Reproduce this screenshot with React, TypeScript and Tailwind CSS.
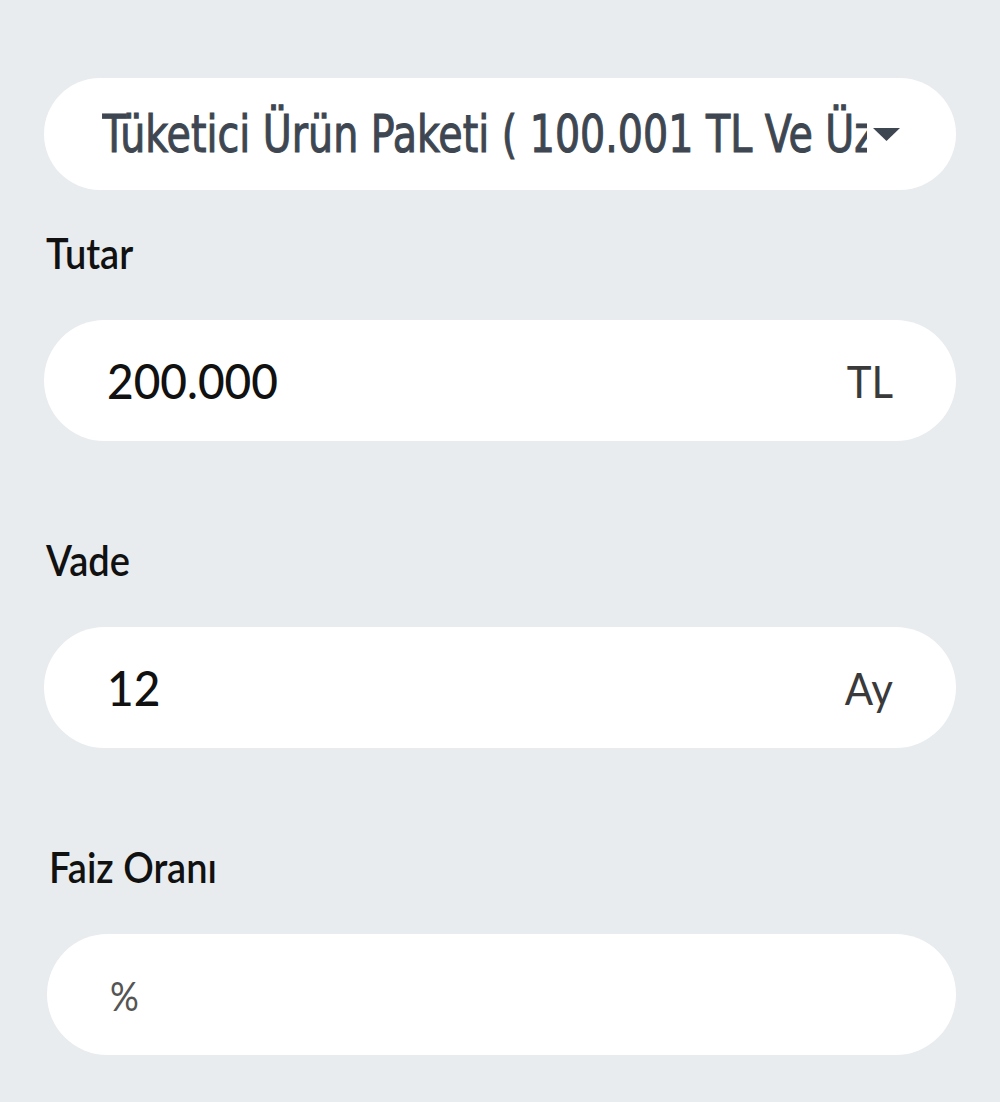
import { useState } from "react";

interface FieldProps {
  label: string;
  value: string;
  suffix?: string;
  shift?: boolean;
}

function Field({ label, value, suffix, shift }: FieldProps) {
  return (
    <div className={shift ? "flex flex-col pl-[3px]" : "flex flex-col"}>
      <div className="h-[40px] flex items-center pl-[2px] mb-[48px]">
        <span className="text-[38px] font-semibold text-[#111] leading-none origin-left scale-y-[1.12] font-['Lato',sans-serif]">
          {label}
        </span>
      </div>
      <div className="h-[121px] bg-white rounded-full flex items-center justify-between px-[63px]">
        {value === "%" ? (
          <span className="text-[36px] text-[#555] leading-none scale-y-[1.15] font-['Lato',sans-serif]">%</span>
        ) : (
          <span className="text-[46px] font-medium text-[#111] leading-none scale-y-[1.06] font-['Lato',sans-serif]">
            {value}
          </span>
        )}
        {suffix && (
          <span className="text-[42px] text-[#3a3a3a] leading-none scale-y-[1.05] font-['Lato',sans-serif] font-normal">
            {suffix}
          </span>
        )}
      </div>
    </div>
  );
}

export default function App() {
  const [paket] = useState("Tüketici Ürün Paketi ( 100.001 TL Ve Üzeri )");

  return (
    <div className="min-h-[1102px] w-full bg-[#e8ecef] px-[44px] pt-[78px]">
      {/* Package select */}
      <div className="h-[112px] bg-white rounded-full flex items-center pl-[58px] pr-[56px]">
        <div className="flex-1 overflow-hidden whitespace-nowrap py-[12px]">
          <span className="inline-block text-[44px] font-normal text-[#3e4751] leading-none scale-y-[1.17] [-webkit-text-stroke:0.9px_#3e4751] font-['DejaVu_Sans_Condensed','DejaVu_Sans',sans-serif]">
            {paket}
          </span>
        </div>
        <svg width="27" height="13" viewBox="0 0 27 13" className="ml-[6px] shrink-0">
          <path d="M0 0 H27 L13.5 13 Z" fill="#3e4751" />
        </svg>
      </div>

      <div className="flex flex-col gap-[98px] mt-[42px]">
        <Field label="Tutar" value="200.000" suffix="TL" />
        <Field label="Vade" value="12" suffix="Ay" />
        <Field label="Faiz Oranı" value="%" shift />
      </div>
    </div>
  );
}
